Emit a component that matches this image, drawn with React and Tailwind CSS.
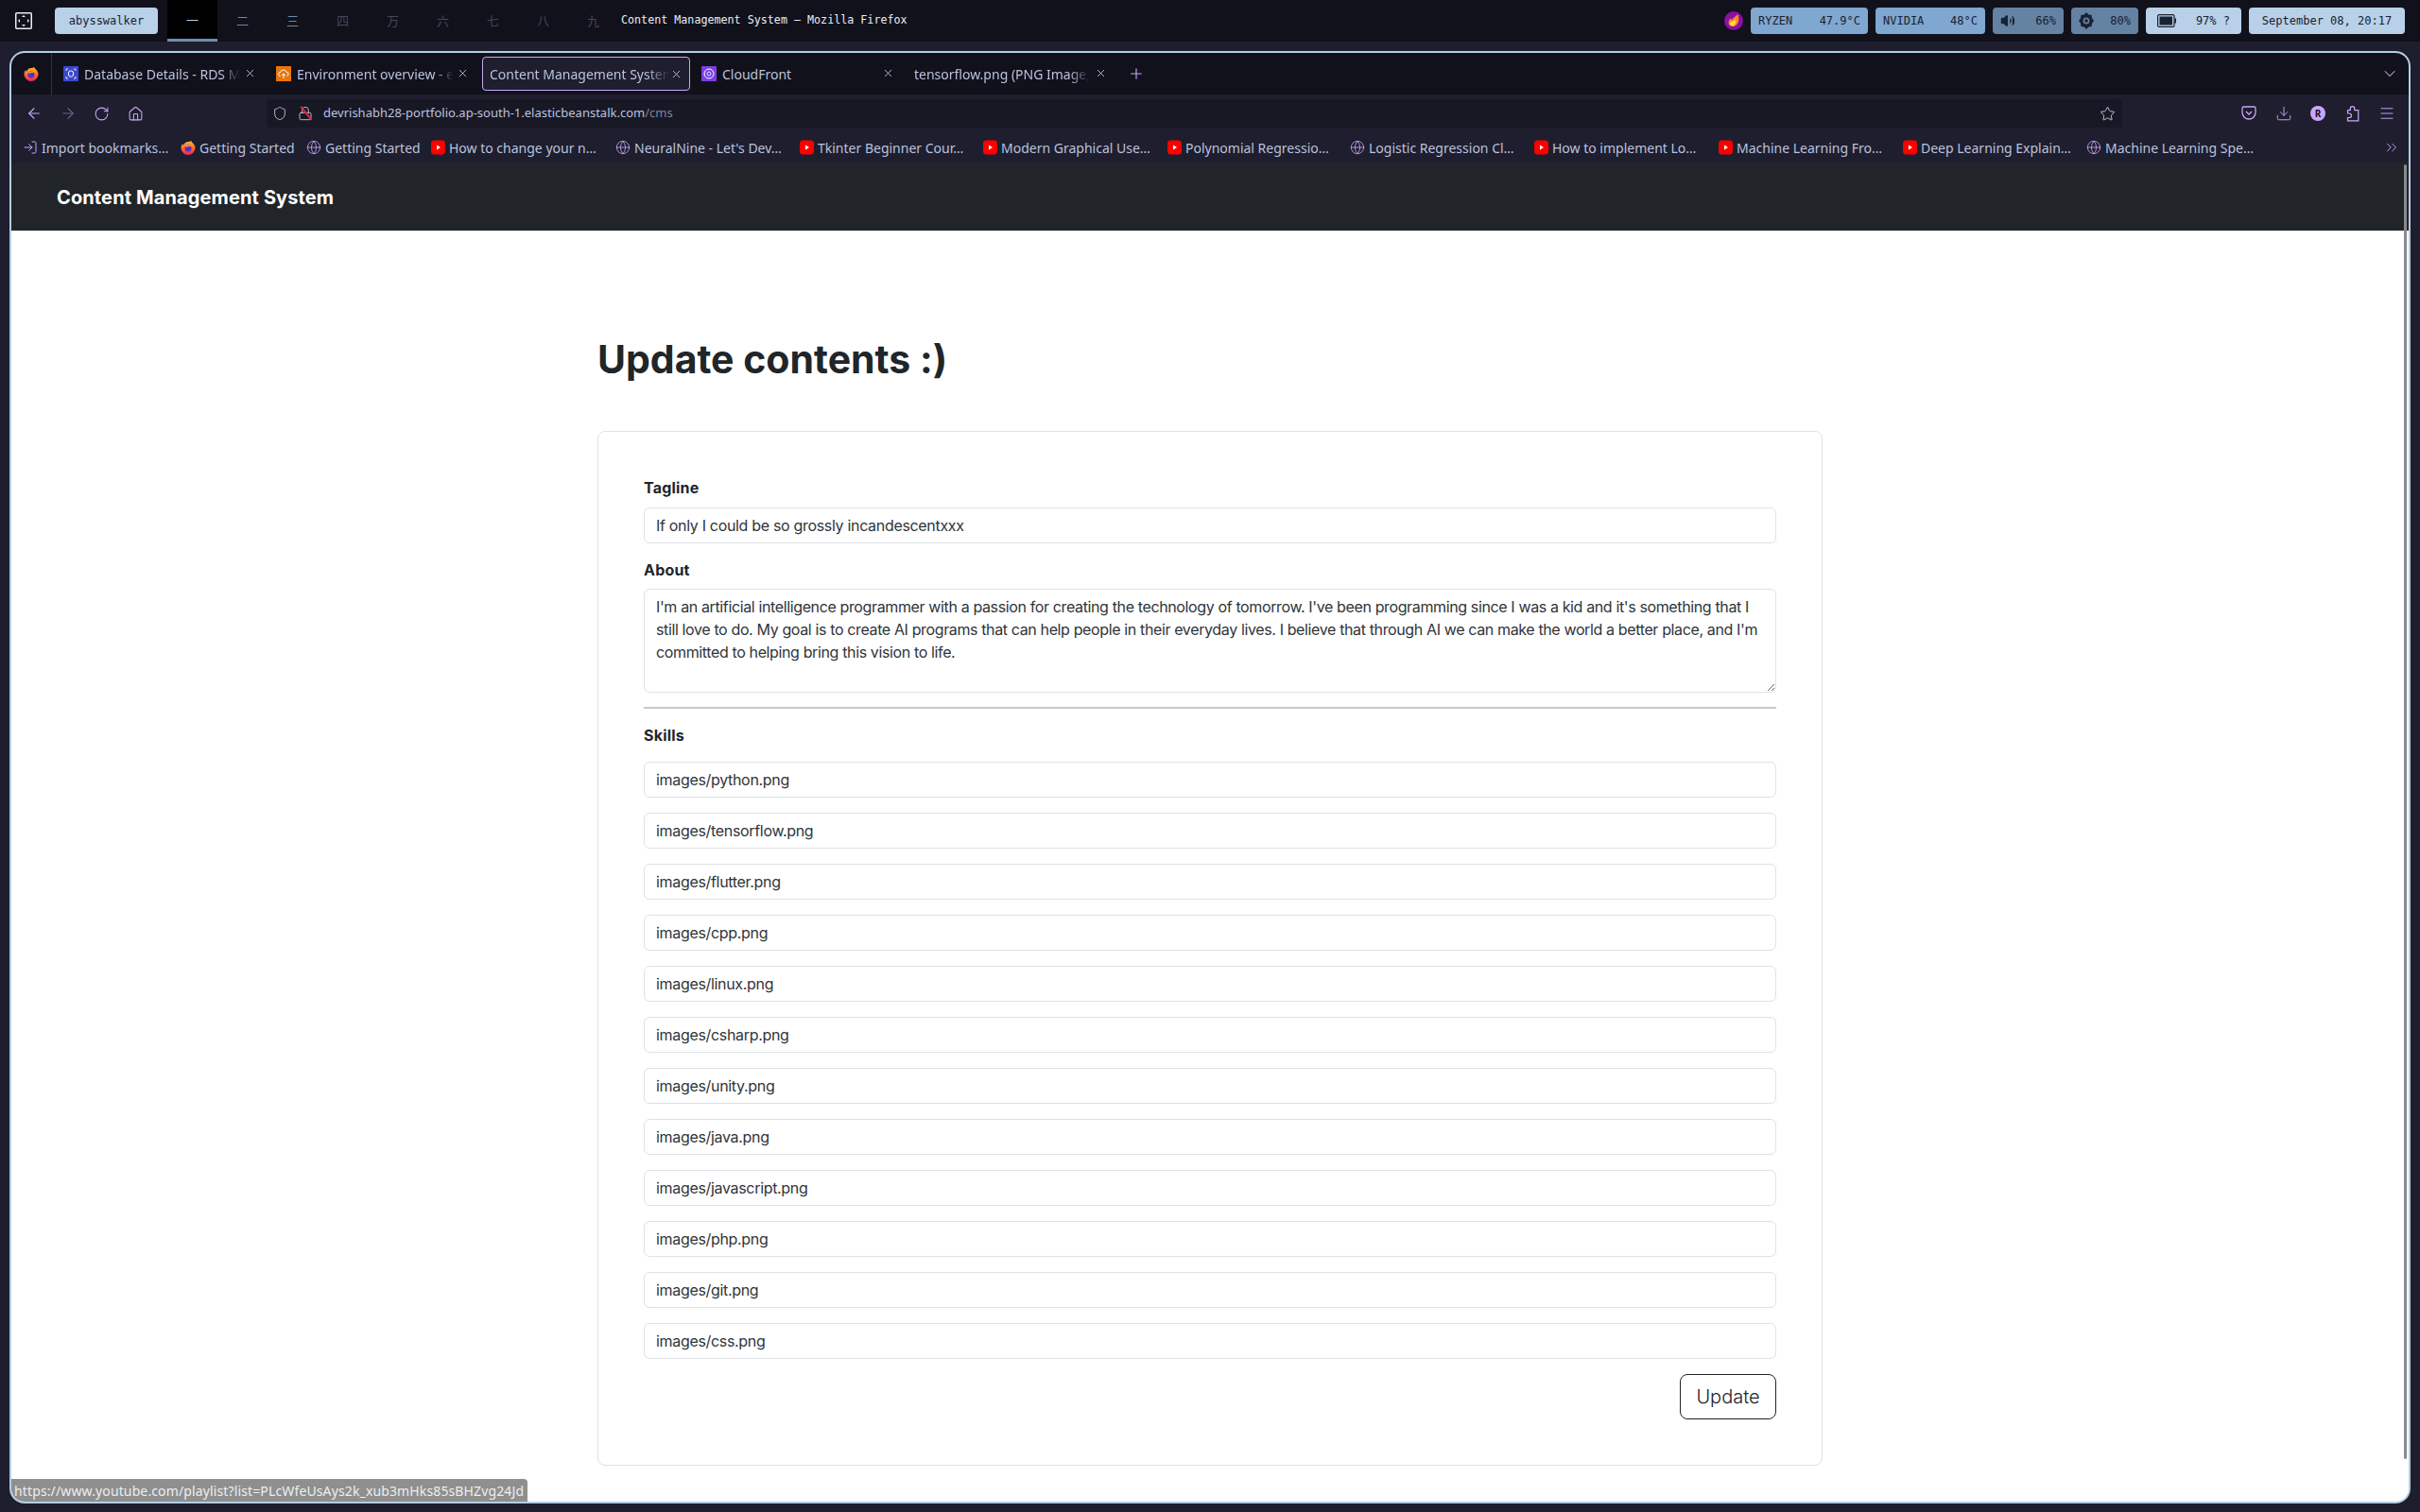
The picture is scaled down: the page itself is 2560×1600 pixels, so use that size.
import { ArrowLeft, ArrowRight, RotateCw, Home, Shield, Lock, Star, Download, Menu, Plus, X, ChevronDown, ChevronsRight, Globe, LogIn, Volume2 } from 'lucide-react';

const uiFont = 'font-["Noto_Sans",sans-serif]';
const monoFont = 'font-["DejaVu_Sans_Mono",monospace]';

const Firefox = ({ size = 16 }) => (
  <svg width={size} height={size} viewBox="0 0 16 16" className="shrink-0">
    <defs>
      <linearGradient id="ff" x1="0" y1="0" x2="0" y2="1">
        <stop offset="0" stopColor="#ffbd2e" />
        <stop offset="0.55" stopColor="#ff6a2b" />
        <stop offset="1" stopColor="#e5235f" />
      </linearGradient>
    </defs>
    <path d="M11 .8c.3 1.6 1.6 2 2.6 3.2 1.3 1.5 1.9 3 1.9 4.5A7.5 7.5 0 0 1 .5 8.5C.5 6.8 1.2 5 2.2 3.9c0 .9.3 1.5.9 1.9C3.6 3.8 5.6 2 8 2c1.300 0 2.500-.3 3-1.200z" fill="url(#ff)" />
    <circle cx="8" cy="9" r="3.6" fill="#5b2fb8" />
    <path d="M4.500 7c2-1.600 5-1.500 7 .3-1.500-.5-3-.5-4 0-1 .4-2 .3-3-.3z" fill="#ff9a2e" />
  </svg>
);

const YouTube = () => (
  <svg width="15" height="16" viewBox="0 0 15 16" className="shrink-0">
    <rect x="0" y="0.500" width="15" height="15" rx="3.500" fill="#f00" />
    <path d="M6 5.500 10 8l-4 2.500z" fill="#fff" />
  </svg>
);

const BookmarkIcon = ({ type }) => {
  if (type === 'yt') return <YouTube />;
  if (type === 'ff') return <Firefox />;
  if (type === 'import') return <LogIn size={16} strokeWidth={1.5} className="shrink-0 text-[#cba6f7]" />;
  return <Globe size={16} strokeWidth={1.25} className="shrink-0 text-[#cba6f7]" />;
};

const bookmarks = [
  { icon: 'import', label: 'Import bookmarks…', w: 'w-[155px]', ml: 'ml-0' },
  { icon: 'ff', label: 'Getting Started', w: 'w-[120px]', ml: 'ml-[12px]' },
  { icon: 'globe', label: 'Getting Started', w: 'w-[120px]', ml: 'ml-[13px]' },
  { icon: 'yt', label: 'How to change your n…', w: 'w-[175px]', ml: 'ml-[12px]' },
  { icon: 'globe', label: "NeuralNine - Let's Dev…", w: 'w-[179px]', ml: 'ml-[20px]' },
  { icon: 'yt', label: 'Tkinter Beginner Cour…', w: 'w-[176px]', ml: 'ml-[16px]' },
  { icon: 'yt', label: 'Modern Graphical Use…', w: 'w-[177px]', ml: 'ml-[18px]' },
  { icon: 'yt', label: 'Polynomial Regressio…', w: 'w-[173px]', ml: 'ml-[18px]' },
  { icon: 'globe', label: 'Logistic Regression Cl…', w: 'w-[175px]', ml: 'ml-[20px]' },
  { icon: 'yt', label: 'How to implement Lo…', w: 'w-[175px]', ml: 'ml-[20px]' },
  { icon: 'yt', label: 'Machine Learning Fro…', w: 'w-[170px]', ml: 'ml-[20px]' },
  { icon: 'yt', label: 'Deep Learning Explain…', w: 'w-[177px]', ml: 'ml-[25px]' },
  { icon: 'globe', label: 'Machine Learning Spe…', w: 'w-[176px]', ml: 'ml-[17px]' },
];

const skills = ['python', 'tensorflow', 'flutter', 'cpp', 'linux', 'csharp', 'unity', 'java', 'javascript', 'php', 'git', 'css'];

const about = "I'm an artificial intelligence programmer with a passion for creating the technology of tomorrow. I've been programming since I was a kid and it's something that I still love to do. My goal is to create AI programs that can help people in their everyday lives. I believe that through AI we can make the world a better place, and I'm committed to helping bring this vision to life.";

const workspaces = ['一', '二', '三', '四', '万', '六', '七', '八', '九'];
const wsColors = ['text-[#b4cde4]', 'text-[#6f8aa8]', 'text-[#6f8aa8]', 'text-[#45475a]', 'text-[#45475a]', 'text-[#45475a]', 'text-[#45475a]', 'text-[#45475a]', 'text-[#45475a]'];

const Pill = ({ className, children }) => (
  <div className={`flex h-7 items-center rounded-[4px] text-[#1a2130] ${className}`}>{children}</div>
);

const Tab = ({ active, icon, title, textClass, mr }) => (
  <div className={`relative flex h-9 w-[220px] shrink-0 items-center rounded-[4px] pl-[7px] ${mr} ${active ? 'border border-[#cba6f7] bg-[#1e1e2e]' : ''}`}>
    {icon && <span className="mr-[6px] shrink-0">{icon}</span>}
    <span className={`whitespace-nowrap text-[14px] text-[#bac2de] [mask-image:linear-gradient(to_right,black_88%,transparent)] ${textClass}`}>{title}</span>
    <X size={13} strokeWidth={1.5} className="absolute left-[198px] top-[11px] text-[#cdd6f4]" />
  </div>
);

const inputClass = 'block w-full rounded-[6px] border border-[#dee2e6] bg-white px-3 text-[16px] text-[#30353a] outline-none';
const labelClass = 'block text-[16px] font-bold leading-6 tracking-[0.2px]';

export default function App() {
  return (
    <div className={`flex h-screen w-full flex-col overflow-hidden bg-[#1e1e2e] ${uiFont}`}>
      {/* top bar */}
      <div className={`flex h-11 shrink-0 items-center bg-[#11111b] ${monoFont} text-[12px]`}>
        <svg width="18" height="18" viewBox="0 0 18 18" className="ml-4 shrink-0" fill="none">
          <rect x="0.750" y="0.750" width="16.500" height="16.500" rx="1" stroke="#e8eef5" strokeWidth="1.500" />
          <path d="M9 3l2 2H7zM9 15l-2-2h4zM3 9l2-2v4zM15 9l-2 2V7z" fill="#e8eef5" />
        </svg>
        <div className="ml-6 flex h-7 w-[109px] shrink-0 items-center justify-center rounded-[4px] bg-[#b8d0e8] text-[#1a2130]">abysswalker</div>
        <div className="ml-[10px] flex h-11 shrink-0">
          {workspaces.map((w, i) => (
            <div key={w} className={`flex h-11 w-[53px] items-center justify-center font-["Noto_Sans_CJK_SC",sans-serif] text-[13px] ${wsColors[i]} ${i === 0 ? 'border-b-[3px] border-[#6f8fb0] bg-black' : ''}`}>{w}</div>
          ))}
        </div>
        <div className="ml-[3px] text-[11.7px] text-[#e8eef5]">Content Management System — Mozilla Firefox</div>
        <div className="ml-auto mr-4 flex items-center gap-2">
          <svg width="20" height="20" viewBox="0 0 20 20" className="shrink-0">
            <circle cx="10" cy="10" r="10" fill="#8a0ea8" />
            <path d="M14.500 3c.500 2.500 1.500 5 .500 8-.800 2.500-3 5-6 5-2.500 0-4.500-1.500-4.500-4 0-2 1.500-3.500 2.500-5 .200 1 .500 1.800 1 2.200C9 7 12 5.500 14.500 3z" fill="#ff8a1e" />
            <path d="M12 8.500c.300 2 .500 3.500-.500 5-.700 1-1.800 1.800-3 1.800-1.300 0-2.300-1-2.300-2.200 0-1.600 1.800-2 3-2.600 1.200-.5 2.200-1 2.800-2z" fill="#ffe14d" />
          </svg>
          <Pill className="w-[124px] justify-between bg-[#7fa7d0] px-2"><span>RYZEN</span><span>47.9°C</span></Pill>
          <Pill className="w-[116px] justify-between bg-[#7fa7d0] px-2"><span>NVIDIA</span><span>48°C</span></Pill>
          <Pill className="w-[75px] justify-between bg-[#6482a2] px-2"><Volume2 size={16} fill="#1a2130" strokeWidth={1.75} /><span>66%</span></Pill>
          <Pill className="w-[71px] justify-between bg-[#6482a2] px-2">
            <svg width="16" height="18" viewBox="0 0 16 18" className="shrink-0">
              <path d="M8 0l2.300 2.500 3.300.4.400 3.300L16 9l-2 2.800-.4 3.300-3.300.4L8 18l-2.300-2.500-3.300-.4-.4-3.300L0 9l2-2.800.4-3.300 3.300-.4z" fill="#1a2130" />
              <circle cx="8" cy="9" r="3.500" fill="#6482a2" />
              <circle cx="8" cy="9" r="1.800" fill="#1a2130" />
            </svg>
            <span>80%</span>
          </Pill>
          <Pill className="w-[101px] bg-[#b8d0e8] px-3">
            <svg width="20" height="14" viewBox="0 0 20 14" className="shrink-0">
              <rect x="0.600" y="0.600" width="17.400" height="12.800" rx="1.500" fill="none" stroke="#1a2130" strokeWidth="1.200" />
              <rect x="2.500" y="2.500" width="13.500" height="9" fill="#1a2130" />
              <rect x="18.500" y="4.500" width="1.500" height="5" fill="#1a2130" />
            </svg>
            <span className="ml-auto whitespace-pre">97% ?</span>
          </Pill>
          <Pill className="w-[165px] justify-center bg-[#b8d0e8]">September 08, 20:17</Pill>
        </div>
      </div>

      {/* firefox window */}
      <div className="relative mx-[10px] mb-[9px] mt-[10px] flex min-h-0 flex-1 flex-col overflow-hidden rounded-[16px] border-2 border-[#b4cde4] bg-white">
        <div className="flex h-11 shrink-0 items-center bg-[#11111b]">
          <div className="flex h-11 w-[43px] shrink-0 items-center justify-center border-r border-[#313244]"><Firefox /></div>
          <div className="ml-[5px] flex items-center">
            <Tab mr="mr-[5px]" title="Database Details - RDS M" icon={
              <svg width="16" height="16" viewBox="0 0 16 16" className="block"><rect width="16" height="16" fill="#3b48cc" /><rect x="5.500" y="5" width="5" height="6" rx="2" fill="none" stroke="#fff" strokeWidth="1" /><path d="M3 3h2M11 3h2M3 13h2M11 13h2M3 3v2M13 3v2M3 11v2M13 11v2" stroke="#fff" strokeWidth="0.800" /></svg>
            } />
            <Tab mr="mr-[5px]" title="Environment overview - e" icon={
              <svg width="16" height="16" viewBox="0 0 16 16" className="block"><rect width="16" height="16" fill="#e8760c" /><path d="M4.500 10.500a2 2 0 0 1 .200-4 3.300 3.300 0 0 1 6.300-.300 2.200 2.200 0 0 1 .500 4.300M8 8v5M6 10l2-2 2 2" fill="none" stroke="#fff" strokeWidth="1" /></svg>
            } />
            <Tab active mr="mr-[5px]" textClass="w-[190px]" title="Content Management System" />
            <Tab mr="mr-[5px]" title="CloudFront" textClass="[mask-image:none]" icon={
              <svg width="16" height="16" viewBox="0 0 16 16" className="block"><rect width="16" height="16" rx="1" fill="#7b3fe4" /><circle cx="8" cy="8" r="5" fill="none" stroke="#fff" strokeWidth="1" /><circle cx="8" cy="8" r="2" fill="none" stroke="#fff" strokeWidth="0.800" /></svg>
            } />
            <Tab mr="mr-[5px]" title="tensorflow.png (PNG Image," />
            <Plus size={18} strokeWidth={1.5} className="ml-[8px] text-[#cba6f7]" />
          </div>
          <ChevronDown size={20} strokeWidth={1.25} className="ml-auto mr-[10px] text-[#cba6f7]" />
        </div>

        <div className="flex h-[37px] shrink-0 items-center bg-[#1e1e2e] pt-[3px]">
          <ArrowLeft size={18} strokeWidth={1.5} className="ml-[15px] text-[#cba6f7]" />
          <ArrowRight size={18} strokeWidth={1.5} className="ml-[18px] text-[#6c5f8a]" />
          <RotateCw size={17} strokeWidth={1.5} className="ml-[18px] text-[#cba6f7]" />
          <Home size={17} strokeWidth={1.5} className="ml-[19px] text-[#cba6f7]" />
          <div className="ml-[130px] flex h-[30px] w-[1963px] shrink-0 items-center rounded-[4px] bg-[#181825]">
            <Shield size={16} strokeWidth={1.25} className="ml-[6px] text-[#cdd6f4]" />
            <span className="relative ml-[11px] block h-4 w-4">
              <Lock size={16} strokeWidth={1.25} className="text-[#cdd6f4]" />
              <span className="absolute left-[8px] top-[-1px] h-[18px] w-[1.500px] -rotate-[40deg] bg-[#e5233d]" />
            </span>
            <span className="ml-[11px] text-[13px] text-[#bac2de]">devrishabh28-portfolio.ap-south-1.elasticbeanstalk.com<span className="text-[#7f849c]">/cms</span></span>
            <Star size={17} strokeWidth={1.25} className="ml-auto mr-[7px] text-[#cdd6f4]" />
          </div>
          <div className="ml-[125px] flex items-center gap-[19px] text-[#cba6f7]">
            <svg width="18" height="18" viewBox="0 0 18 18" fill="none" stroke="currentColor" strokeWidth="1.300" className="shrink-0"><path d="M2 3.500a1.500 1.500 0 0 1 1.500-1.500h11A1.500 1.500 0 0 1 16 3.500V8a7 7 0 0 1-14 0z" /><path d="M6 7l3 3 3-3" /></svg>
            <Download size={18} strokeWidth={1.25} />
            <div className="flex h-4 w-4 shrink-0 items-center justify-center rounded-full bg-[#cba6f7] text-[10px] font-bold text-[#11111b]">R</div>
            <svg width="18" height="18" viewBox="0 0 16 16" fill="none" stroke="currentColor" strokeWidth="1.100" className="shrink-0"><path d="M6.500 3.500a2 2 0 0 1 4 0V5H14v10H4v-3h1.500a2 2 0 0 0 0-4H4V5h2.500z" /></svg>
            <Menu size={18} strokeWidth={1.25} />
          </div>
        </div>

        <div className="flex h-[35px] shrink-0 items-center bg-[#1e1e2e] pl-[12px] pt-[3px] text-[14px] text-[#bac2de]">
          {bookmarks.map((b, i) => (
            <div key={i} className={`flex shrink-0 items-center gap-1 ${b.w} ${b.ml}`}>
              <BookmarkIcon type={b.icon} />
              <span className="whitespace-nowrap">{b.label}</span>
            </div>
          ))}
          <ChevronsRight size={18} strokeWidth={1.25} className="ml-auto mr-[9px] text-[#cba6f7]" />
        </div>

        {/* page */}
        <div className={`min-h-0 flex-1 bg-white font-["Inter",sans-serif] text-[#212529]`}>
          <nav className="flex h-[72px] items-center bg-[#212529] pl-[48px] pt-[1px] text-[20px] font-bold tracking-[0.12px] text-white">Content Management System</nav>
          <main className="mx-auto w-[1296px]">
            <h1 className="mt-[112px] text-[41px] font-bold leading-[48px]">Update contents :)</h1>
            <form className="mt-[52px] rounded-[8px] border border-[#dee2e6] px-[48px] pb-[48px] pt-[47px]">
              <label className={labelClass}>Tagline</label>
              <input className={`${inputClass} mt-[9px] h-[38px] tracking-[-0.32px]`} defaultValue="If only I could be so grossly incandescentxxx" />
              <label className={`${labelClass} mt-[16px]`}>About</label>
              <textarea className={`${inputClass} mt-[8px] h-[110px] resize-y py-[6px] leading-6 tracking-[-0.37px]`} defaultValue={about} />
              <hr className="mt-[15px] border-t-2 border-[#c8c9ca]" />
              <label className={`${labelClass} mt-[16px]`}>Skills</label>
              <div className="mt-[16px] flex flex-col gap-4">
                {skills.map((s) => (
                  <input key={s} className={`${inputClass} h-[38px] tracking-[-0.32px]`} defaultValue={`images/${s}.png`} />
                ))}
              </div>
              <div className="mt-[16px] flex justify-end">
                <button type="button" className="h-[48px] w-[102px] rounded-[8px] border border-[#212529] bg-white text-[20px] font-light text-[#212529]">Update</button>
              </div>
            </form>
          </main>
        </div>

        {/* scrollbar and link status overlay */}
        <div className="absolute right-[2px] top-[118px] h-[1370px] w-[3px] rounded-full bg-[#8a8a8a]" />
        <div className="absolute bottom-0 left-0 flex h-6 w-[546px] items-center rounded-tr-[4px] bg-[#8f8f8f] pl-[3px] text-[14px] tracking-[0.13px] text-[#eeeeee]">https://www.youtube.com/playlist?list=PLcWfeUsAys2k_xub3mHks85sBHZvg24Jd</div>
      </div>
    </div>
  );
}
